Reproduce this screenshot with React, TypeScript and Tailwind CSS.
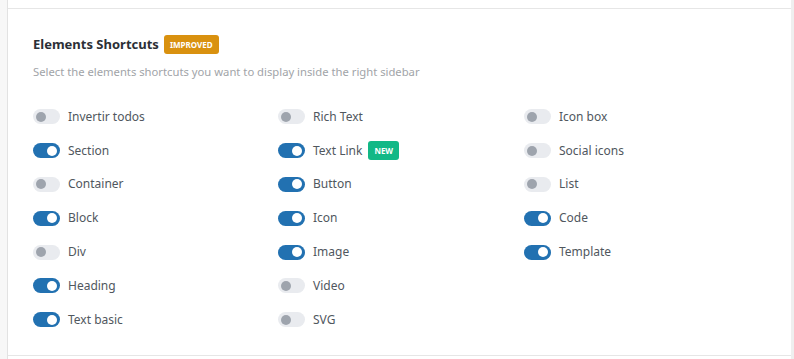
import React from "react"

const columns: { label: string; on: boolean; badge?: string }[][] = [
  [
    { label: "Invertir todos", on: false },
    { label: "Section", on: true },
    { label: "Container", on: false },
    { label: "Block", on: true },
    { label: "Div", on: false },
    { label: "Heading", on: true },
    { label: "Text basic", on: true },
  ],
  [
    { label: "Rich Text", on: false },
    { label: "Text Link", on: true, badge: "NEW" },
    { label: "Button", on: true },
    { label: "Icon", on: true },
    { label: "Image", on: true },
    { label: "Video", on: false },
    { label: "SVG", on: false },
  ],
  [
    { label: "Icon box", on: false },
    { label: "Social icons", on: false },
    { label: "List", on: false },
    { label: "Code", on: true },
    { label: "Template", on: true },
  ],
]

function Toggle({ on }: { on: boolean }) {
  return (
    <span
      className={
        on
          ? "flex h-[15px] w-[27px] shrink-0 items-center justify-end rounded-full bg-[#2271b1] px-[3px]"
          : "flex h-[15px] w-[27px] shrink-0 items-center justify-start rounded-full bg-[#e9ebef] px-[3px]"
      }
    >
      <span
        className={
          on
            ? "h-[10px] w-[10px] rounded-full bg-white"
            : "h-[10px] w-[10px] rounded-full bg-[#9ea4ad]"
        }
      />
    </span>
  )
}

export default function App() {
  return (
    <div
      className="flex h-[359px] w-[794px] bg-[#f5f5f5]"
      style={{ fontFamily: '"Noto Sans", "Open Sans", sans-serif' }}
    >
      <div className="w-[8px] shrink-0 border-r border-[#e2e2e2] bg-[#f7f7f7]" />
      <div className="flex w-[783px] flex-col bg-white">
        <div className="h-[9px] border-b border-[#e6e6e6]" />
        <div className="flex-1 border-b border-[#e6e6e6] pl-[25px] pt-[26px]">
          <div className="flex items-center gap-[5px]">
            <h2 className="text-[13px] font-bold text-[#2b2f36]">Elements Shortcuts</h2>
            <span className="flex h-[19px] items-center rounded-[3px] bg-[#d9910f] px-[6px] text-[8px] font-bold leading-none text-white">
              IMPROVED
            </span>
          </div>
          <p className="mt-[9px] text-[11.25px] text-[#a1a4a8]">
            Select the elements shortcuts you want to display inside the right sidebar
          </p>
          <div className="mt-[29px] grid grid-cols-[245px_246px_1fr]">
            {columns.map((col, i) => (
              <div key={i} className="flex flex-col gap-[18.8px]">
                {col.map((item) => (
                  <div key={item.label} className="flex h-[15px] items-center gap-[8px]">
                    <Toggle on={item.on} />
                    <span className="text-[12px] text-[#50575e]">{item.label}</span>
                    {item.badge && (
                      <span className="ml-[-2px] flex h-[19px] items-center rounded-[3px] bg-[#12b886] px-[6px] text-[8px] font-bold leading-none text-white">
                        {item.badge}
                      </span>
                    )}
                  </div>
                ))}
              </div>
            ))}
          </div>
        </div>
        <div className="h-[3px]" />
      </div>
      <div className="flex-1 bg-[#efefef]" />
    </div>
  )
}
